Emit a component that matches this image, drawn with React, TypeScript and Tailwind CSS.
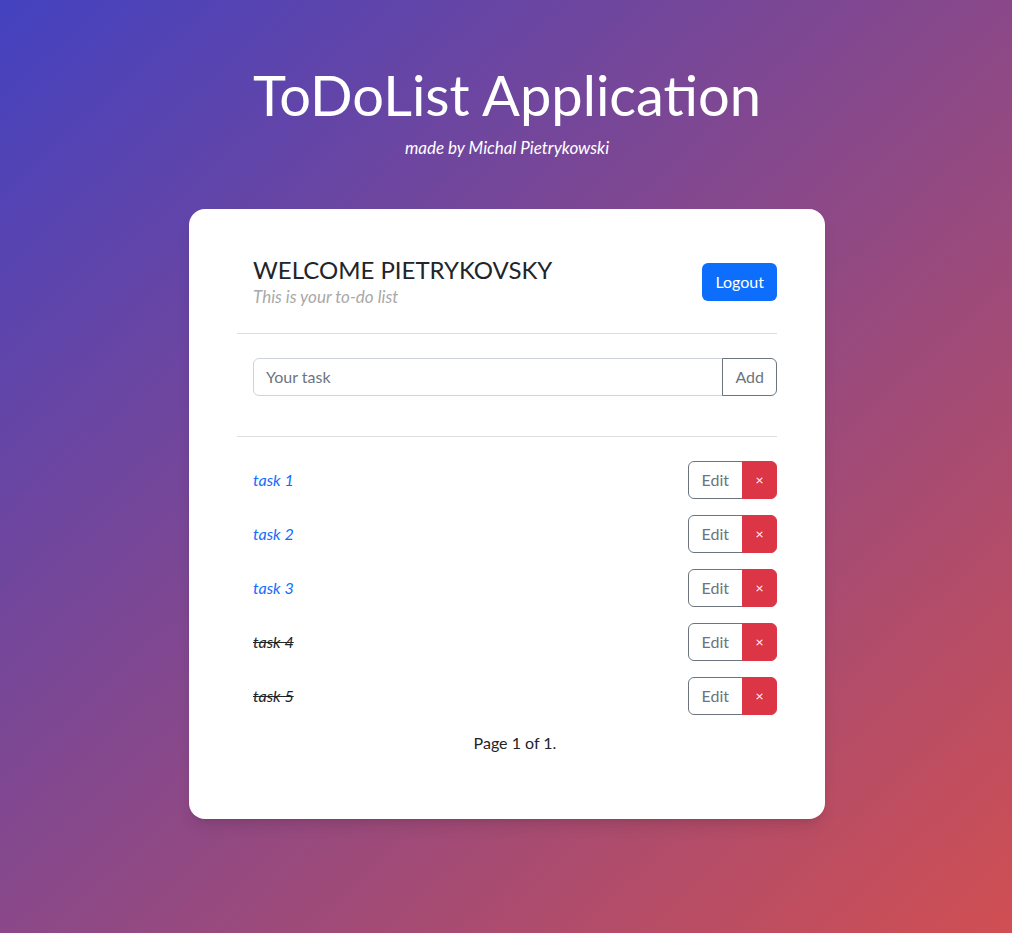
import React from "react";

const tasks = [
  { name: "task 1", done: false },
  { name: "task 2", done: false },
  { name: "task 3", done: false },
  { name: "task 4", done: true },
  { name: "task 5", done: true },
];

export default function App() {
  return (
    <div
      className="min-h-screen w-full bg-[linear-gradient(to_bottom_right,#4442c0,#d04f52)] pt-[61px] pb-[112px] pl-[2px] text-[#212529]"
      style={{ fontFamily: "Lato, 'Liberation Sans', sans-serif" }}
    >
      <h1 className="text-center text-[56px] font-normal leading-[1.2] text-white">ToDoList Application</h1>
      <p className="mt-[8px] text-center text-[17px] italic leading-6 text-white">made by Michal Pietrykowski</p>

      <div className="mx-auto mt-[49px] w-[636px] rounded-[16px] bg-white px-12 pt-[47px] pb-16 shadow-lg">
        <div className="flex items-center justify-between pl-4">
          <div>
            <h2 className="text-[24px] font-normal uppercase leading-[1.2]">Welcome Pietrykovsky</h2>
            <p className="text-[17px] italic leading-6 text-[#a9a9a9]">This is your to-do list</p>
          </div>
          <button className="-mt-[2px] h-[38px] rounded-[6px] bg-[#0d6efd] px-[13px] text-[16px] text-white">Logout</button>
        </div>

        <hr className="mt-[24px] border-t border-[#dedede]" />

        <div className="mt-6 flex pl-4">
          <input
            className="h-[38px] flex-1 rounded-l-[6px] border border-[#ced4da] px-3 text-[16px] placeholder:text-[#6c757d] outline-none"
            placeholder="Your task"
          />
          <button className="-ml-px h-[38px] rounded-r-[6px] border border-[#6c757d] px-3 text-[16px] text-[#6c757d]">Add</button>
        </div>

        <hr className="mt-10 border-t border-[#dedede]" />

        <div className="mt-6 flex flex-col gap-4 pl-4">
          {tasks.map((t) => (
            <div key={t.name} className="flex h-[38px] items-center justify-between">
              <span
                className={
                  t.done
                    ? "text-[16px] italic leading-6 text-[#212529] line-through"
                    : "text-[16px] italic leading-6 text-[#0d6efd]"
                }
              >
                {t.name}
              </span>
              <div className="flex">
                <button className="h-[38px] rounded-l-[6px] border border-[#6c757d] px-[13px] text-[16px] text-[#6c757d]">Edit</button>
                <button className="-ml-px h-[38px] w-[35px] rounded-r-[6px] border border-[#dc3545] bg-[#dc3545] text-[14px] text-white">×</button>
              </div>
            </div>
          ))}
        </div>

        <p className="mt-4 pl-4 text-center text-[16px] leading-6">Page 1 of 1.</p>
      </div>
    </div>
  );
}
